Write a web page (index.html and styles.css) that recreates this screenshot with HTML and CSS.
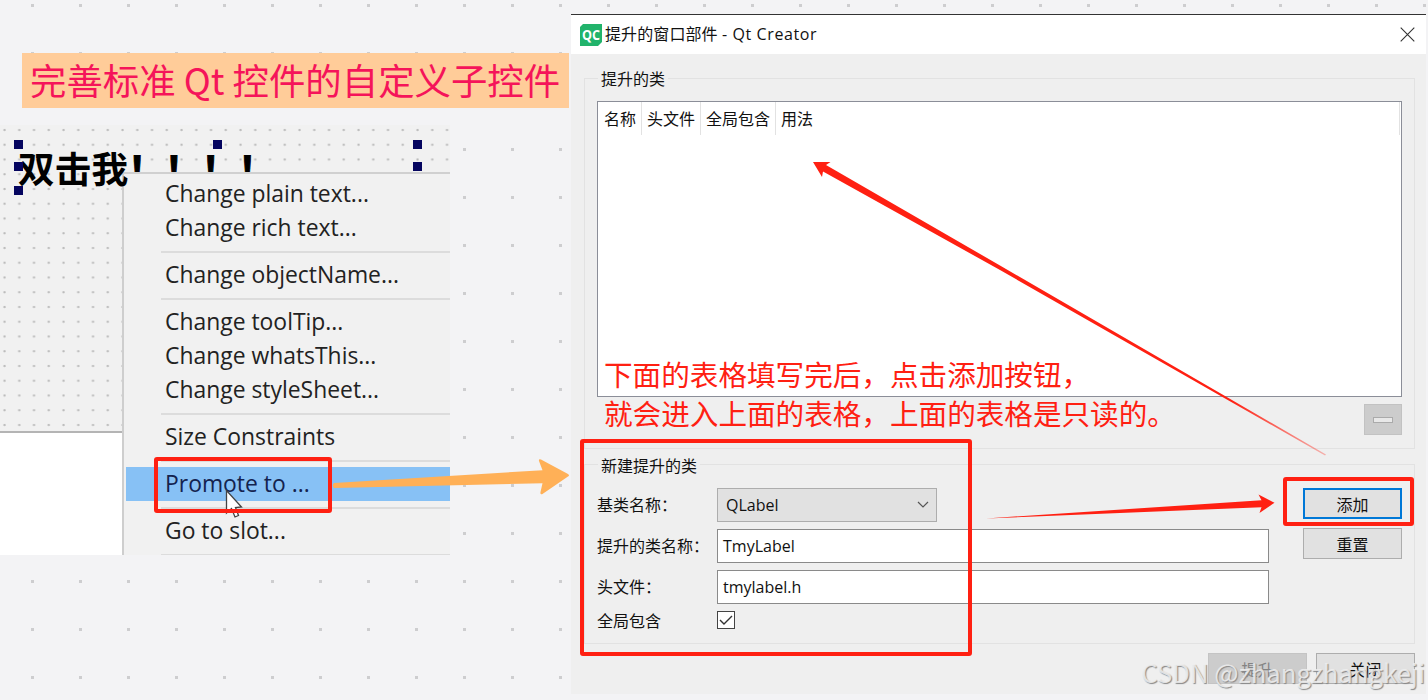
FILE: index.html
```
<!DOCTYPE html>
<html lang="zh-CN">
<head>
    <meta charset="UTF-8">
    <meta name="viewport" content="width=device-width, initial-scale=1.0">
    <title>完善标准 Qt 控件的自定义子控件</title>
    <link rel="stylesheet" href="styles.css">
</head>
<body>
    <div class="board">
        <h1 class="note">完善标准 Qt 控件的自定义子控件</h1>

        <!-- form designer with the context menu open -->
        <div class="designer">
            <div class="text-edit"></div>
            <ul class="menu">
                <li>Change plain text...</li>
                <li>Change rich text...</li>
                <li class="sep"></li>
                <li>Change objectName...</li>
                <li class="sep"></li>
                <li>Change toolTip...</li>
                <li>Change whatsThis...</li>
                <li>Change styleSheet...</li>
                <li class="sep"></li>
                <li>Size Constraints</li>
                <li class="sep"></li>
                <li class="active">Promote to ...</li>
                <li class="sep"></li>
                <li>Go to slot...</li>
                <li class="sep"></li>
            </ul>
            <div class="label"><span>双击我</span><span class="bangs">！！！！</span></div>
            <i class="handle h-tl"></i>
            <i class="handle h-tc"></i>
            <i class="handle h-tr"></i>
            <i class="handle h-ml"></i>
            <i class="handle h-mr"></i>
            <i class="handle h-bl"></i>
            <svg class="cursor" width="20" height="32" viewBox="0 0 20 32">
                <path d="M1.5 1.5V24L6.500 19.500L10 28L13.500 26.500L10.500 18.500L16.500 18Z" fill="#fff" stroke="#444" stroke-width="1.3"/>
            </svg>
        </div>

        <div class="dialog">
            <div class="title-bar">
                <svg class="logo" width="22" height="22" viewBox="0 0 22 22">
                    <path d="M3 0H22V18L18 22H0V3Z" fill="#21b36b"/>
                    <text x="11" y="16.300" text-anchor="middle" textLength="18" lengthAdjust="spacingAndGlyphs">QC</text>
                </svg>
                <span class="title">提升的窗口部件 <span class="app">- Qt Creator</span></span>
                <svg class="close" width="15" height="15" viewBox="0 0 15 15">
                    <path d="M.7.7L14.300 14.300M14.300.7L.7 14.300" stroke="#333" stroke-width="1.1"/>
                </svg>
            </div>

            <div class="group promoted">
                <span class="legend">提升的类</span>
                <div class="table">
                    <div class="table-head">
                        <span class="col-name">名称</span>
                        <span class="col-header">头文件</span>
                        <span class="col-global">全局包含</span>
                        <span class="col-usage">用法</span>
                    </div>
                </div>
                <button class="remove"><i></i></button>
            </div>

            <div class="group new-class">
                <span class="legend">新建提升的类</span>
                <div class="form">
                    <label>基类名称：</label>
                    <div class="select">
                        <span>QLabel</span>
                        <svg width="12" height="8" viewBox="0 0 12 8">
                            <path d="M1 1L6 6L11 1" fill="none" stroke="#555" stroke-width="1.2"/>
                        </svg>
                    </div>
                    <label>提升的类名称：</label>
                    <div class="input">TmyLabel</div>
                    <label>头文件：</label>
                    <div class="input">tmylabel.h</div>
                    <label class="check-label">全局包含</label>
                    <div class="checkbox">
                        <svg width="16" height="16" viewBox="0 0 16 16">
                            <path d="M2 8L6 12L14 4" fill="none" stroke="#333" stroke-width="1.4"/>
                        </svg>
                    </div>
                </div>
                <div class="actions">
                    <button class="primary">添加</button>
                    <button>重置</button>
                </div>
            </div>

            <div class="footer">
                <button class="disabled">提升</button>
                <button>关闭</button>
            </div>
        </div>

        <!-- annotations -->
        <p class="remark">下面的表格填写完后，点击添加按钮，<br>就会进入上面的表格，上面的表格是只读的。</p>
        <div class="box box-promote"></div>
        <div class="box box-form"></div>
        <div class="box box-add"></div>
        <svg class="arrows" width="1428" height="700" viewBox="0 0 1428 700">
            <defs>
                <linearGradient id="fade" gradientUnits="userSpaceOnUse" x1="1326" y1="455" x2="1230" y2="401">
                    <stop offset="0" stop-color="#ff2012" stop-opacity=".3"/>
                    <stop offset="1" stop-color="#ff2012"/>
                </linearGradient>
            </defs>
            <path d="M334 483L542.500 470.200L539 461Q538.500 458.500 541 459.500L568 474Q570 475.500 568 476.500L542.500 494Q540 495 540.500 492L542.500 483.200L334 488Q331.500 485.500 334 483Z" fill="#ffb057"/>
            <path d="M813 162H830.500L826 165L1000 265.500L1326 454.500L1325 455.500L1000 270L823 171.500L822 177Z" fill="url(#fade)"/>
            <path d="M986 518.500L1261.500 500.200L1258.500 494.500L1274.500 502.800L1259.500 513L1261.500 507.200Z" fill="#ff2012"/>
        </svg>
        <div class="watermark">CSDN @zhangzhangkeji</div>
    </div>
</body>
</html>
```

FILE: styles.css
```
* {
    box-sizing: border-box;
}

body {
    margin: 0;
    font-family: "Open Sans", "Noto Sans CJK SC", sans-serif;
    color: #111;
}

.board {
    position: relative;
    width: 1428px;
    height: 700px;
    overflow: hidden;
    background: conic-gradient(from 90deg at 45px 45px, #cdcdcf 25%, #f3f3f5 0) 34px 7px / 48px 48px;
}

.note {
    position: absolute;
    left: 22px;
    top: 53px;
    width: 547px;
    height: 55px;
    margin: 0;
    padding-left: 8px;
    background: #ffcc99;
    color: #f5145a;
    font: 36.400px/53px "Noto Sans CJK SC", sans-serif;
    white-space: nowrap;
}

/* designer */
.designer {
    position: absolute;
    left: 0;
    top: 125px;
    width: 450px;
    height: 430px;
    overflow: hidden;
    background: radial-gradient(circle at 4.500px 5px, #bbb 0.8px, transparent 1.5px) 0 0 / 14.760px 14.750px, #f1f1f1;
}

.text-edit {
    width: 122px;
    height: 124px;
    margin-top: 306px;
    border-top: 2px solid #b4b4b4;
    background: #fff;
}

.menu {
    position: absolute;
    left: 122px;
    top: 47px;
    width: 330px;
    margin: 0;
    padding: 3px 0 0 2px;
    border-top: 2px solid #d0d0d0;
    border-left: 2px solid #cecece;
    background: #f1f1f1;
    list-style: none;
    font-size: 22.900px;
    line-height: 34px;
    color: #222;
}

.menu li {
    height: 34px;
    padding-left: 39px;
    white-space: nowrap;
}

.menu .sep {
    height: 13px;
    padding: 6px 0 0 35px;
}

.menu .sep::before {
    content: "";
    display: block;
    height: 1.500px;
    background: #dcdcdc;
}

.menu .active {
    background: #87c1f5;
    color: #14234f;
}

.label {
    position: absolute;
    left: 18px;
    top: 22px;
    display: flex;
    font: bold 36.700px/40px "Noto Sans CJK SC", sans-serif;
    color: #000;
}

.bangs {
    height: 25px;
    overflow: hidden;
    -webkit-text-stroke: 1px #000;
}

.handle {
    position: absolute;
    width: 9px;
    height: 9px;
    background: #05055f;
}

.h-tl { left: 14px; top: 15px; }
.h-tc { left: 213px; top: 15px; }
.h-tr { left: 413px; top: 15px; }
.h-ml { left: 14px; top: 37px; }
.h-mr { left: 413px; top: 37px; }
.h-bl { left: 14px; top: 61px; }

.cursor {
    position: absolute;
    left: 225px;
    top: 364px;
}

/* dialog */
.dialog {
    position: absolute;
    left: 571px;
    top: 14px;
    width: 855px;
    height: 680px;
    border-top: 1px solid #333;
    background: #efefef;
    font-size: 16px;
}

.title-bar {
    display: flex;
    align-items: center;
    height: 39px;
    padding: 0 11px 0 9px;
    background: #fff;
}

.logo text {
    font: bold 15px "Open Sans", sans-serif;
    fill: #fff;
}

.title {
    flex: 1;
    margin: 0 0 3px 3px;
    letter-spacing: 0.1px;
}

.app {
    letter-spacing: 0.600px;
}

.group {
    position: relative;
    width: 831px;
    margin-left: 13px;
    border: 1.500px solid #e2e2e2;
}

.legend {
    position: absolute;
    left: 13px;
    top: -12px;
    padding: 0 3px;
    background: #efefef;
    line-height: 24px;
}

.promoted {
    height: 371px;
    margin-top: 24px;
    padding: 22px 12px 0;
}

.table {
    height: 296px;
    border: 1px solid #8b8e98;
    background: #fff;
}

.table-head {
    display: flex;
    height: 33px;
    border-right: 1px solid #e2e2e2;
    margin-right: 1px;
    line-height: 34px;
}

.table-head span {
    padding-left: 6px;
    border-right: 1px solid #e2e2e2;
}

.table-head .col-name { width: 44px; }
.table-head .col-header { width: 59px; padding-left: 5px; }
.table-head .col-global { width: 75px; padding-left: 5px; }
.table-head .col-usage { padding-left: 5px; border: 0; }

button {
    width: 99px;
    height: 31px;
    padding: 0;
    border: 1px solid #adadad;
    background: #e1e1e1;
    color: #111;
    font: inherit;
}

.promoted .remove {
    display: flex;
    align-items: center;
    justify-content: center;
    width: 38px;
    margin: 7px 0 0 auto;
    border-color: #c2c2c2;
    background: #ccc;
}

.remove i {
    width: 20px;
    height: 6px;
    border: 1px solid #aaa;
    background: #e8e8e8;
}

.new-class {
    display: flex;
    justify-content: space-between;
    height: 180px;
    margin-top: 15px;
    padding: 23px 12px 0;
}

.new-class .legend {
    top: -11px;
}

.form {
    display: grid;
    grid-template-columns: 120px 552px;
    grid-template-rows: 34px 34px 34px 18px;
    row-gap: 7px;
    align-items: center;
    line-height: 24px;
}

.form label {
    white-space: nowrap;
}

.form .check-label {
    margin-top: 2px;
}

.select {
    display: flex;
    align-items: center;
    justify-content: space-between;
    width: 220px;
    height: 34px;
    padding: 0 7px 0 8px;
    border: 1px solid #adadad;
    background: #e1e1e1;
}

.input {
    height: 34px;
    padding-left: 5px;
    border: 1px solid #8a8a8a;
    background: #fff;
    line-height: 32px;
}

.checkbox {
    width: 18px;
    height: 18px;
    border: 1px solid #444;
    background: #fff;
}

.checkbox svg {
    display: block;
}

.actions {
    display: flex;
    flex-direction: column;
    gap: 9px;
}

.primary {
    border: 2px solid #0078d7;
}

.footer {
    display: flex;
    justify-content: flex-end;
    gap: 9px;
    padding: 9px 11px 0 0;
}

.disabled {
    border-color: #c4c4c4;
    background: #ccc;
    color: #838383;
}

/* annotations */
.remark {
    position: absolute;
    left: 604px;
    top: 354px;
    margin: 0;
    color: #ff2012;
    font: 28.600px/39px "Noto Sans CJK SC", sans-serif;
    white-space: nowrap;
}

.box {
    position: absolute;
    border: 4.500px solid #ff2012;
    border-radius: 3px;
}

.box-promote {
    left: 154px;
    top: 457px;
    width: 178px;
    height: 56px;
}

.box-form {
    left: 580px;
    top: 439px;
    width: 392px;
    height: 217px;
}

.box-add {
    left: 1283px;
    top: 477px;
    width: 131px;
    height: 49px;
}

.arrows {
    position: absolute;
    left: 0;
    top: 0;
}

.watermark {
    position: absolute;
    right: 3px;
    top: 655px;
    color: rgba(240, 240, 240, 0.85);
    font: 25.700px/34px "Noto Sans CJK SC", sans-serif;
    text-shadow: 1px 1px 1px #888;
}
```
